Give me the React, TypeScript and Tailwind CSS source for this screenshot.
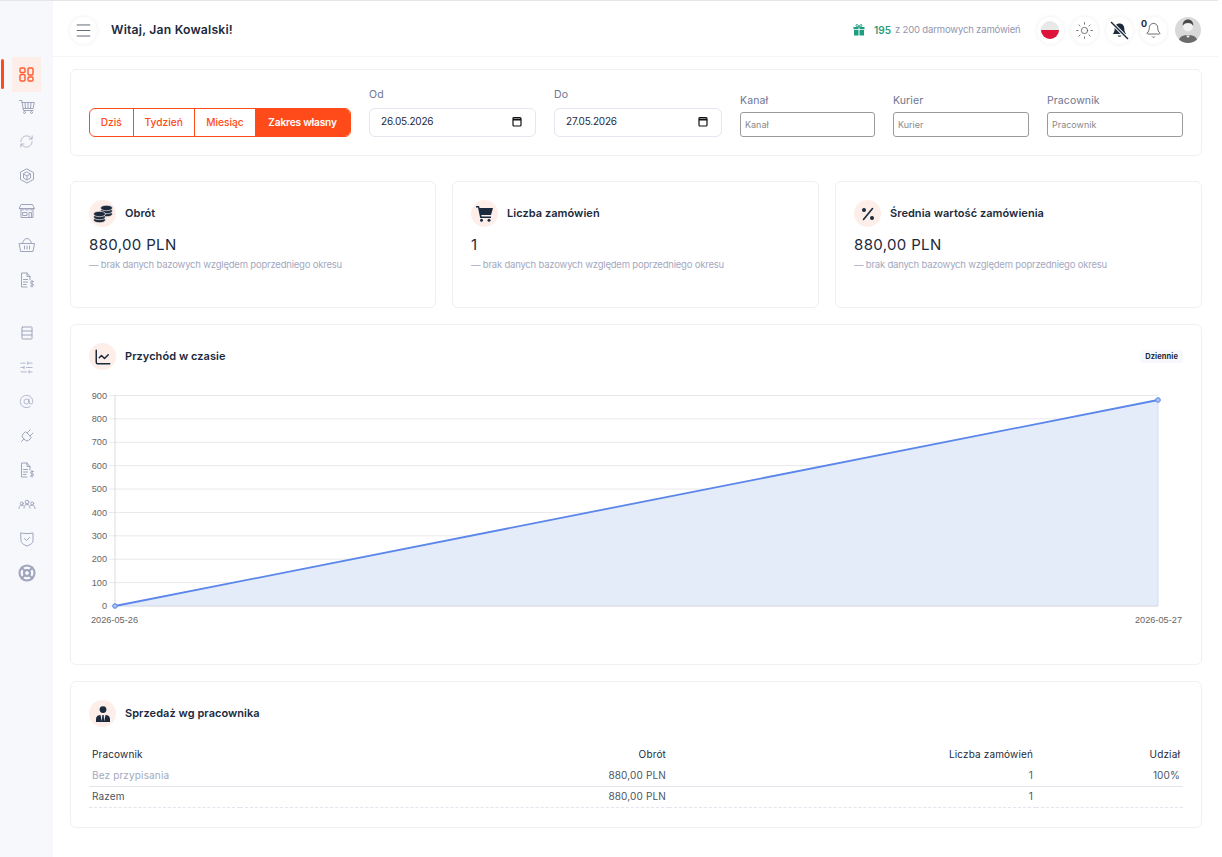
import { Bell, ChartLine, LifeBuoy, Plug, SlidersHorizontal, Sun, AtSign, RefreshCw, Menu } from 'lucide-react';
import type { ReactNode } from 'react';

function Outline({ children }: { children: ReactNode }) {
  return (
    <svg width="18" height="18" viewBox="0 0 18 18" fill="none" stroke="currentColor" strokeWidth="1" strokeLinecap="round" strokeLinejoin="round">
      {children}
    </svg>
  );
}

const CartOutline = () => (
  <Outline>
    <path d="M1.500 2.500h2.300l1.700 10h9.500" />
    <path d="M3.800 4.500h12.500l-1.200 6H5" />
    <path d="M7 4.500l.5 6M10 4.500v6M13 4.500l-.5 6" />
    <circle cx="6.500" cy="14.500" r="1" />
    <circle cx="13.500" cy="14.500" r="1" />
  </Outline>
);
const Refresh = () => <RefreshCw size={15} strokeWidth={1.200} />;
const CubeIcon = () => (
  <Outline>
    <path d="M9 2l6.500 3.500v7L9 16l-6.500-3.500v-7z" />
    <path d="M9 5l3.500 2v4L9 13l-3.500-2V7zM5.500 7L9 9l3.500-2M9 9v4" />
  </Outline>
);
const StoreIcon = () => (
  <Outline>
    <path d="M3.500 2.500h11l2 4h-15z" />
    <path d="M1.500 6.500c.3 2 4.700 2 5 0 .3 2 4.700 2 5 0 .3 2 4.700 2 5 0" />
    <path d="M3 8.500v7h12v-7" />
    <rect x="5" y="10.500" width="4" height="3" />
    <path d="M11 15.500v-5h2.500v5" />
  </Outline>
);
const BasketIcon = () => (
  <Outline>
    <path d="M4.500 7.500C5 4.500 7 2.500 9 2.500s4 2 4.500 5" />
    <path d="M1.500 7.500h15l-1.500 8H3z" />
    <path d="M6.500 10v3M9 10v3M11.500 10v3" />
  </Outline>
);
const InvoiceIcon = () => (
  <Outline>
    <path d="M12 9V5.500L9 2H3.500v14H9" />
    <path d="M9 2v3.500h3" />
    <path d="M5.500 8.500h4M5.500 11h4M5.500 13.500h2.500" />
    <path d="M15.500 10.500h-2c-1.200 0-1.200 2.200 0 2.200h1c1.200 0 1.200 2.300 0 2.300h-2M14 9.500v6.500" />
  </Outline>
);
const RowsIcon = () => (
  <Outline>
    <rect x="4" y="3" width="10" height="12" rx="0.500" />
    <path d="M4 7h10M4 11h10" />
  </Outline>
);
const UsersIcon = () => (
  <Outline>
    <circle cx="9" cy="6" r="1.800" />
    <path d="M6 12c0-5 6-5 6 0" />
    <circle cx="3.800" cy="7.500" r="1.500" />
    <path d="M1 12.500c0-3.300 3-4 4.500-2.800" />
    <circle cx="14.200" cy="7.500" r="1.500" />
    <path d="M17 12.500c0-3.300-3-4-4.500-2.800" />
  </Outline>
);
const ShieldIcon = () => (
  <Outline>
    <path d="M3 3c4 .8 8 .8 12 0v8c0 2.500-3.500 4-6 5-2.500-1-6-2.500-6-5z" />
    <path d="M6.500 8.500L8.500 10.500 11.500 7.500" />
  </Outline>
);
const PlugIcon = () => <Plug size={17} strokeWidth={1.300} className="rotate-45" />;
const Sliders = () => <SlidersHorizontal size={15} strokeWidth={1.200} />;
const At = () => <AtSign size={15} strokeWidth={1.200} />;

const navTop = [CartOutline, Refresh, CubeIcon, StoreIcon, BasketIcon, InvoiceIcon];
const navBottom = [RowsIcon, Sliders, At, PlugIcon, InvoiceIcon, UsersIcon, ShieldIcon];

function DashIcon() {
  return (
    <svg width="15" height="15" viewBox="0 0 15 15" fill="none" stroke="#ff5a2e" strokeWidth="1.400">
      <rect x="1" y="1" width="5" height="4.500" rx="1.200" />
      <rect x="9" y="1" width="5" height="7" rx="1.200" />
      <rect x="1" y="7.500" width="5" height="6.500" rx="1.200" />
      <rect x="9" y="10" width="5" height="4" rx="1.200" />
    </svg>
  );
}

function Round({ children }: { children: ReactNode }) {
  return <div className="flex h-[27px] w-[27px] shrink-0 items-center justify-center rounded-full bg-[#fdeee9] text-[#1b2a3d]">{children}</div>;
}

function Coins() {
  return (
    <svg width="20" height="18" viewBox="0 0 20 18" fill="#1b2a3d" stroke="#fdeee9" strokeWidth="0.700">
      <ellipse cx="13.500" cy="9" rx="6" ry="2.700" />
      <ellipse cx="13.500" cy="6" rx="6" ry="2.700" />
      <ellipse cx="13.500" cy="3" rx="6" ry="2.700" />
      <ellipse cx="6.500" cy="15" rx="6" ry="2.700" />
      <ellipse cx="6.500" cy="12" rx="6" ry="2.700" />
      <ellipse cx="6.500" cy="9" rx="6" ry="2.700" />
    </svg>
  );
}

function CartSolid() {
  return (
    <svg width="17" height="16" viewBox="0 0 17 16" fill="#1b2a3d">
      <path d="M0 0h3l.6 2H17l-2 7H5.200l.4 1.500H15V12H4.200L2 1.500H0z" />
      <circle cx="5.500" cy="14.300" r="1.500" />
      <circle cx="13" cy="14.300" r="1.500" />
    </svg>
  );
}

function PercentDots() {
  return (
    <svg width="14" height="14" viewBox="0 0 14 14" fill="#1b2a3d">
      <path d="M11.500 1.500L2.500 12.500" stroke="#1b2a3d" strokeWidth="1.600" strokeLinecap="round" />
      <circle cx="3" cy="3" r="2" />
      <circle cx="11" cy="11" r="2" />
    </svg>
  );
}

function PersonTie() {
  return (
    <svg width="14" height="16" viewBox="0 0 14 16" fill="#1b2a3d">
      <circle cx="7" cy="3.600" r="3.400" />
      <path d="M0 16v-3c0-2.500 2-4 4.500-4L6 16zM14 16v-3c0-2.500-2-4-4.500-4L8 16zM6.300 9h1.400l.5 7H5.800z" />
    </svg>
  );
}

function GiftSolid() {
  return (
    <svg width="12" height="12" viewBox="0 0 12 12" fill="#1f9d80">
      <path d="M.5 3h5v2.200h-5zM6.500 3h5v2.200h-5zM1 6h4.500v5.500H1zM6.500 6H11v5.500H6.500z" />
      <path d="M6 3C4.500 3 2.800 2.500 3 1.300 3.200 0 5.300.3 6 3c.7-2.700 2.800-3 3-1.700C9.200 2.500 7.500 3 6 3z" fill="none" stroke="#1f9d80" strokeWidth="1" />
    </svg>
  );
}

function BellMuted() {
  return (
    <svg width="21" height="21" viewBox="0 0 21 21">
      <path d="M10.500 3.500c3 0 4.800 2.300 4.800 5 0 3 1 4.500 2 5.500H3.700c1-1 2-2.500 2-5.500 0-2.700 1.800-5 4.800-5z" fill="#1b2a3d" />
      <path d="M8.500 15.500h4c-.3 1.600-3.700 1.600-4 0z" fill="#1b2a3d" />
      <path d="M2 2l17 17" stroke="#fff" strokeWidth="3.200" />
      <path d="M2 2l17 17" stroke="#1b2a3d" strokeWidth="1.500" />
    </svg>
  );
}

function Avatar() {
  return (
    <div className="h-[26px] w-[26px] overflow-hidden rounded-full bg-[#d9d9d9]">
      <svg width="26" height="26" viewBox="0 0 26 26">
        <circle cx="13" cy="9.500" r="5" fill="#f1f1f1" />
        <path d="M7.800 9c-.5-4 2-6.500 5.200-6.500S18.700 5 18.200 9c-1-2-2.200-3-5.200-3s-4.200 1-5.200 3z" fill="#4a4a4a" />
        <path d="M3.500 26c0-6 3.500-8 9.500-8s9.500 2 9.500 8z" fill="#6b6b6b" />
        <path d="M11 18.500h4l-2 2.500z" fill="#f1f1f1" />
      </svg>
    </div>
  );
}

function Calendar() {
  return (
    <svg width="10" height="11" viewBox="0 0 10 11" fill="none" stroke="#111" strokeWidth="1.200">
      <rect x="1" y="1.500" width="8" height="8.500" rx="1" />
      <path d="M1 3.500h8" strokeWidth="2" />
    </svg>
  );
}

function Kpi({ icon, title, value }: { icon: ReactNode; title: string; value: string }) {
  return (
    <div className="h-[127px] rounded-md border border-[#eff0f3] bg-white px-[18px] pt-[18px]">
      <div className="flex items-center gap-[9px]">
        <Round>{icon}</Round>
        <span className="pb-[1px] text-[11px] font-semibold tracking-[0.05px] text-[#1b2a3d]">{title}</span>
      </div>
      <div className="mt-[7px] text-[15px] leading-[22px] tracking-[0.35px] text-[#1b2a3d]">{value}</div>
      <div className="mt-[2px] text-[9.500px] leading-[14px] tracking-[-0.2px] text-[#a4a8c0]">— brak danych bazowych względem poprzedniego okresu</div>
    </div>
  );
}

const ticks = [900, 800, 700, 600, 500, 400, 300, 200, 100, 0];

function RevenueChart() {
  return (
    <svg width="1100" height="240" viewBox="0 0 1100 240" className="block">
      {ticks.map((t, i) => {
        const y = 10.500 + i * 23.390;
        return (
          <g key={t}>
            <line x1="23" x2="1072" y1={y} y2={y} stroke="#e9e9ec" strokeWidth="1" />
            <text x="21" y={y + 3.200} textAnchor="end" fontSize="9.200" fill="#666" fontFamily="Liberation Sans, sans-serif">{t}</text>
          </g>
        );
      })}
      <line x1="29" x2="29" y1="10" y2="221" stroke="#dcdcdf" strokeWidth="1" />
      <path d="M29 221L1072 15V221Z" fill="#e4ebf9" />
      <line x1="1072" x2="1072" y1="15" y2="221" stroke="#d5def2" strokeWidth="1" />
      <line x1="29" x2="1072" y1="221" y2="221" stroke="#d5d9e6" strokeWidth="1" />
      <path d="M29 221L1072 15" fill="none" stroke="#5b86ea" strokeWidth="1.800" />
      <circle cx="29" cy="221" r="2.300" fill="#a9c0f3" stroke="#5b86ea" strokeWidth="1" />
      <circle cx="1072" cy="15" r="2.300" fill="#a9c0f3" stroke="#5b86ea" strokeWidth="1" />
      <text x="5" y="237.500" fontSize="9.200" fill="#666" fontFamily="Liberation Sans, sans-serif">2026-05-26</text>
      <text x="1049" y="237.500" fontSize="9.200" fill="#666" fontFamily="Liberation Sans, sans-serif">2026-05-27</text>
    </svg>
  );
}

function Field({ label, placeholder, width }: { label: string; placeholder: string; width: string }) {
  return (
    <div className={width}>
      <div className="text-[10.500px] leading-[16px] tracking-[0.1px] text-[#6f7592]">{label}</div>
      <div className="mt-[3px] flex h-[25px] items-center rounded-[3px] border border-[#9b9b9b] pl-[4px] text-[9px] text-[#8a8a8a]">{placeholder}</div>
    </div>
  );
}

function DateField({ label, value, width }: { label: string; value: string; width: string }) {
  return (
    <div className={width}>
      <div className="text-[10.500px] leading-[16px] tracking-[0.1px] text-[#6f7592]">{label}</div>
      <div className="mt-[5px] flex h-[29px] items-center justify-between rounded-md border border-[#e4e7f0] pb-[3px] pl-[11px] pr-[13px] text-[10px] tracking-[-0.2px] text-[#1b2a3d]">
        {value}
        <Calendar />
      </div>
    </div>
  );
}

const circle = 'flex h-[27px] w-[27px] items-center justify-center rounded-full bg-white shadow-[0_0_4px_rgba(0,0,0,0.08)]';

export default function App() {
  return (
    <div className="flex min-h-[857px] w-[1218px] bg-white font-['Inter',sans-serif] text-[#1b2a3d]">
      <aside className="flex w-[53px] shrink-0 flex-col items-center border-t border-[#e5e5e5] bg-[#f7f8fb] pt-[56px] text-[#a0a5bd]">
        <div className="relative flex h-[35px] w-full items-center justify-center">
          <span className="absolute left-[1px] top-[2px] h-[30px] w-[3px] rounded-full bg-[#ff4b19]" />
          <div className="flex h-[35px] w-[29px] items-center justify-center bg-[#fdeee9]"><DashIcon /></div>
        </div>
        <div className="-mt-[2px] flex flex-col items-center">
          {navTop.map((Icon, i) => (
            <div key={i} className="flex h-[34.500px] items-center justify-center"><Icon /></div>
          ))}
        </div>
        <div className="mt-[19px] flex flex-col items-center">
          {navBottom.map((Icon, i) => (
            <div key={i} className="flex h-[34.300px] items-center justify-center"><Icon /></div>
          ))}
          <div className="flex h-[34.300px] items-center justify-center"><LifeBuoy size={18} strokeWidth={2.800} /></div>
        </div>
      </aside>
      <div className="min-w-0 flex-1">
        <header className="flex h-[57px] items-center justify-between border-y border-t-[#e5e5e5] border-b-[#f4f4f6] pl-[17px] pr-[17.500px] pt-[3px]">
          <div className="flex items-center gap-[14px]">
            <div className={circle}><Menu size={19} strokeWidth={1.100} className="text-[#4b5563]" /></div>
            <span className="text-[12.200px] font-semibold tracking-[0.2px] text-[#1b2a3d]">Witaj, Jan Kowalski!</span>
          </div>
          <div className="flex items-center">
            <GiftSolid />
            <span className="ml-[9px] text-[10px] font-semibold text-[#1f9d80]">195</span>
            <span className="ml-[4px] text-[9.500px] tracking-[-0.16px] text-[#9296ae]">z 200 darmowych zamówień</span>
            <div className="ml-[16px] flex gap-[7.500px]">
              <div className={circle}>
                <div className="h-[18px] w-[18px] overflow-hidden rounded-full bg-[#e8e8e8]"><div className="mt-[9px] h-[9px] bg-[#dc143c]" /></div>
              </div>
              <div className={circle}><Sun size={19} strokeWidth={0.900} className="text-[#444]" /></div>
              <div className={circle}><BellMuted /></div>
              <div className={`relative ${circle}`}>
                <Bell size={17} strokeWidth={1} className="text-[#333]" />
                <span className="absolute left-[1px] top-[1px] text-[9px] font-bold leading-[12px]">0</span>
              </div>
              <Avatar />
            </div>
          </div>
        </header>
        <main className="flex flex-col pl-[17px] pr-[16px] pt-[12px]">
          <section className="flex h-[87px] items-end rounded-md border border-[#eff0f3] bg-white pb-[18px] pl-[18px] pr-[18px]">
            <div className="flex h-[29px] overflow-hidden rounded-md border border-[#ff4b19] text-[10.200px] font-medium text-[#ff4b19]">
              <div className="flex w-[44px] items-center justify-center border-r border-[#ff4b19]">Dziś</div>
              <div className="flex w-[62px] items-center justify-center border-r border-[#ff4b19]">Tydzień</div>
              <div className="flex w-[61px] items-center justify-center">Miesiąc</div>
              <div className="flex w-[96px] items-center justify-center bg-[#ff4b19] font-semibold tracking-[-0.2px] text-white">Zakres własny</div>
            </div>
            <div className="ml-[18px] flex gap-[18px]">
              <DateField label="Od" value="26.05.2026" width="w-[167px]" />
              <DateField label="Do" value="27.05.2026" width="w-[168px]" />
            </div>
            <div className="ml-[18px] flex gap-[18px]">
              <Field label="Kanał" placeholder="Kanał" width="w-[135px]" />
              <Field label="Kurier" placeholder="Kurier" width="w-[136px]" />
              <Field label="Pracownik" placeholder="Pracownik" width="w-[136px]" />
            </div>
          </section>
          <section className="mt-[25px] grid grid-cols-[366px_367px_1fr] gap-[16px]">
            <Kpi icon={<Coins />} title="Obrót" value="880,00 PLN" />
            <Kpi icon={<CartSolid />} title="Liczba zamówień" value="1" />
            <Kpi icon={<PercentDots />} title="Średnia wartość zamówienia" value="880,00 PLN" />
          </section>
          <section className="mt-[16px] h-[341px] rounded-md border border-[#eff0f3] bg-white px-[18px] pt-[18px]">
            <div className="flex items-center justify-between">
              <div className="flex items-center gap-[9px]">
                <Round><ChartLine size={18} strokeWidth={2} /></Round>
                <span className="text-[11px] font-semibold tracking-[0.05px]">Przychód w czasie</span>
              </div>
              <span className="rounded-[4px] bg-[#f7f8fb] px-[5px] py-[1px] text-[7.500px] font-bold tracking-[0.1px]">Dziennie</span>
            </div>
            <div className="mt-[15px] -ml-[3px]"><RevenueChart /></div>
          </section>
          <section className="mb-[28px] mt-[16px] h-[147px] rounded-md border border-[#eff0f3] bg-white px-[18px] pt-[18px]">
            <div className="flex items-center gap-[9px]">
              <Round><PersonTie /></Round>
              <span className="text-[11px] font-semibold tracking-[0.05px]">Sprzedaż wg pracownika</span>
            </div>
            <table className="mt-[17px] w-full table-fixed text-[10px] tracking-[0.15px]">
              <colgroup><col className="w-[151px]" /><col className="w-[429px]" /><col className="w-[367px]" /><col /></colgroup>
              <thead>
                <tr className="h-[21px] text-[#1b2a3d]">
                  <th className="pl-[3px] text-left font-normal">Pracownik</th>
                  <th className="pr-[3px] text-right font-normal">Obrót</th>
                  <th className="pr-[3px] text-right font-normal">Liczba zamówień</th>
                  <th className="pr-[3px] text-right font-normal">Udział</th>
                </tr>
              </thead>
              <tbody>
                <tr className="h-[21px] border-b border-[#e4e4ee] text-[#4b5563]">
                  <td className="pl-[3px] text-[#a4a8c0]">Bez przypisania</td>
                  <td className="pr-[3px] text-right">880,00 PLN</td>
                  <td className="pr-[3px] text-right">1</td>
                  <td className="pr-[3px] text-right">100%</td>
                </tr>
                <tr className="h-[21px] border-b border-dashed border-[#e4e4ee] text-[#4b5563]">
                  <td className="pl-[3px]">Razem</td>
                  <td className="pr-[3px] text-right">880,00 PLN</td>
                  <td className="pr-[3px] text-right">1</td>
                  <td />
                </tr>
              </tbody>
            </table>
          </section>
        </main>
      </div>
    </div>
  );
}
